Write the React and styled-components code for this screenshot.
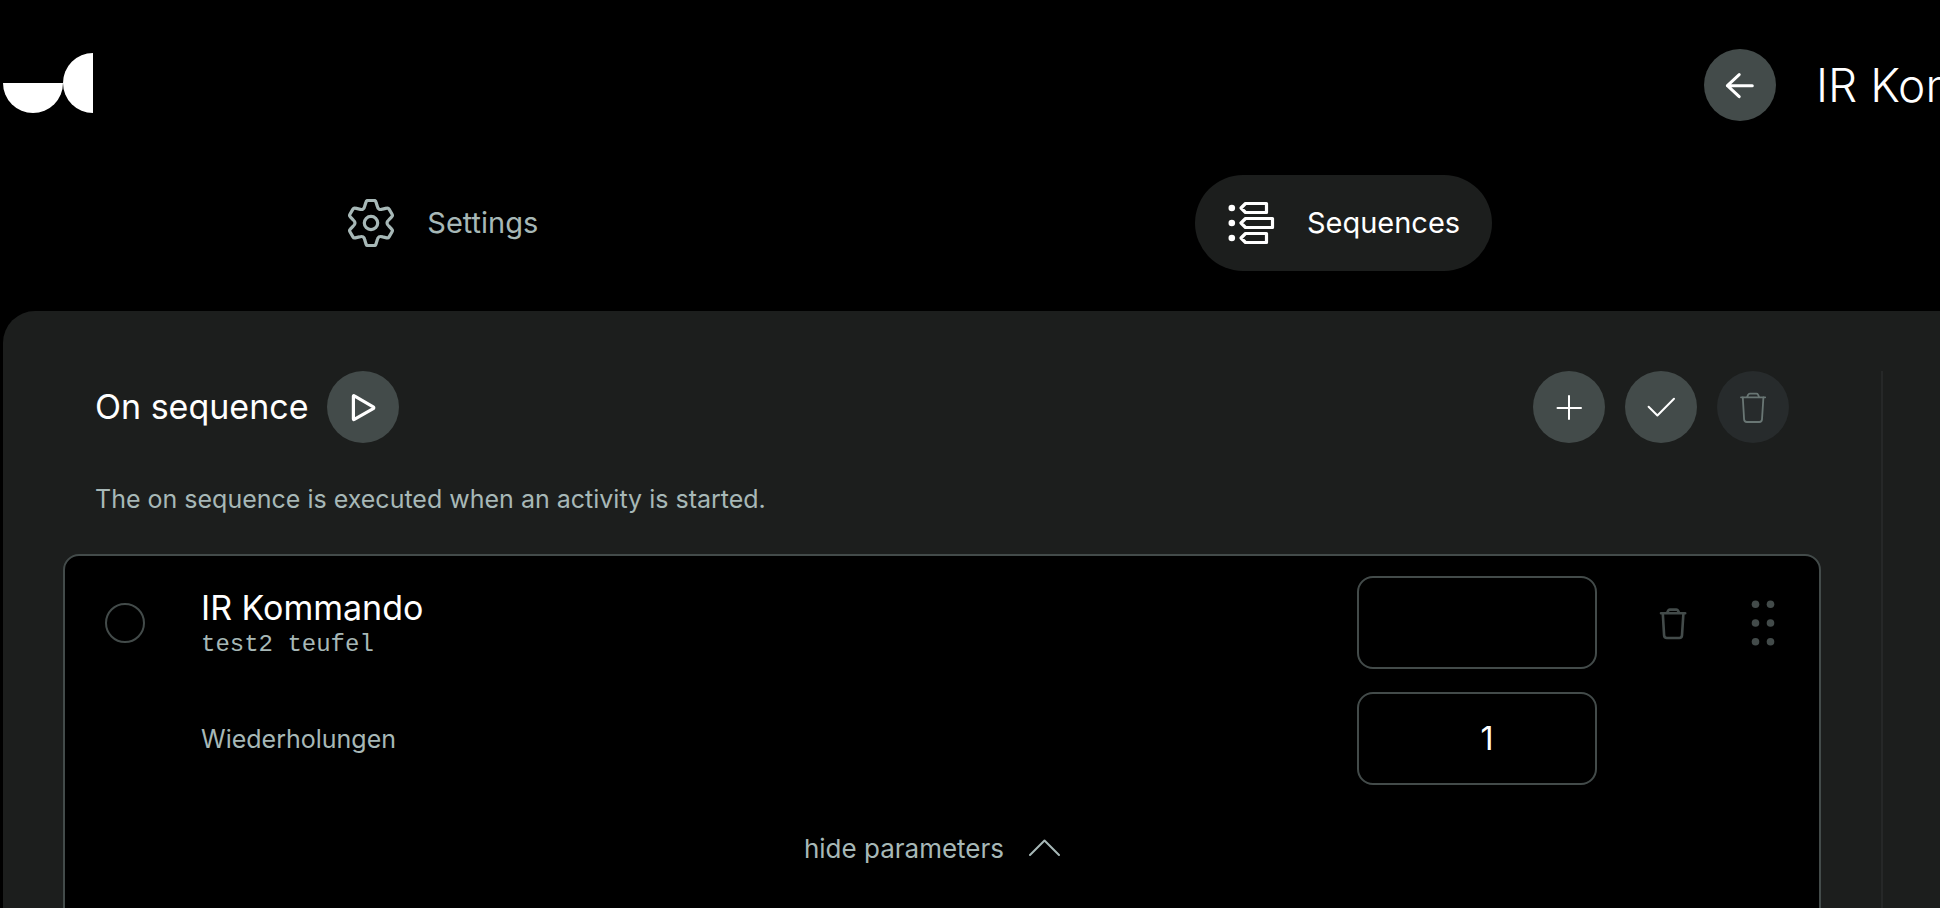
import React, { useState } from "react";
import styled, { createGlobalStyle, ThemeProvider } from "styled-components";

const theme = {
  black: "#000000",
  panel: "#1c1e1d",
  line: "#262828",
  disabled: "#272b2c",
  gray: "#434b4a",
  muted: "#697674",
  soft: "#a7b8b7",
  white: "#ffffff"
};

const GlobalStyle = createGlobalStyle`
  *, *::before, *::after {
    box-sizing: border-box;
  }

  body {
    margin: 0;
    background: #000000;
    color: #ffffff;
    font-family: Inter, "Open Sans", sans-serif;
    font-size: 25px;
    line-height: 36px;
  }

  button, input {
    font: inherit;
    color: inherit;
  }

  h1, h2, h3, p {
    margin: 0;
    font-weight: 400;
  }
`;

const Page = styled.div`
  display: flex;
  flex-direction: column;
  height: 100vh;
  padding-left: 3px;
  overflow: hidden;
`;

const Header = styled.header`
  display: flex;
  flex: none;
  justify-content: space-between;
  align-items: center;
  padding-top: 34px;
`;

const HeaderTitle = styled.div`
  display: flex;
  flex: 0 0 236px;
  align-items: center;
  gap: 40px;
  height: 102px;
  overflow: hidden;
`;

const PageTitle = styled.h1`
  flex: none;
  font-size: 46px;
  font-weight: 300;
  line-height: 72px;
  white-space: nowrap;
`;

const RoundButton = styled.button`
  display: flex;
  flex: none;
  justify-content: center;
  align-items: center;
  width: 72px;
  height: 72px;
  padding: 0;
  border: none;
  border-radius: 50%;
  background: ${p => p.theme.gray};
  cursor: pointer;

  &:disabled {
    background: ${p => p.theme.disabled};
    color: ${p => p.theme.muted};
    cursor: default;
  }
`;

const Tabs = styled.nav`
  display: flex;
  flex: none;
  justify-content: space-around;
  width: 93%;
  padding: 39px 0 40px;
`;

const Tab = styled.button`
  display: flex;
  align-items: center;
  gap: 32px;
  height: 96px;
  padding: 0 32px;
  border: none;
  border-radius: 48px;
  background: ${p => (p.$active ? p.theme.panel : "transparent")};
  color: ${p => (p.$active ? p.theme.white : p.theme.soft)};
  font-size: 29px;
  cursor: pointer;
`;

const Panel = styled.main`
  display: flex;
  flex: 1;
  min-height: 0;
  padding: 60px 57px 0 60px;
  border-top-left-radius: 32px;
  background: ${p => p.theme.panel};
`;

const Column = styled.section`
  flex: 1;
  padding-right: 60px;
  border-right: 2px solid ${p => p.theme.line};
`;

const ColumnHeader = styled.div`
  display: flex;
  align-items: center;
  gap: 18px;
  padding: 0 32px;
`;

const ColumnTitle = styled.h2`
  font-size: 34px;
  line-height: 48px;
`;

const Actions = styled.div`
  display: flex;
  gap: 20px;
  margin-left: auto;
`;

const Description = styled.p`
  padding: 38px 32px 37px;
  color: ${p => p.theme.soft};
`;

const Card = styled.article`
  height: 100%;
  padding: 20px 32px 0 40px;
  border: 2px solid ${p => p.theme.gray};
  border-radius: 16px;
  background: ${p => p.theme.black};
`;

const Row = styled.div`
  display: grid;
  grid-template-columns: 40px 1fr 240px 100px 90px;
  align-items: center;
  height: 93px;
  margin-bottom: 23px;
`;

const Select = styled.input`
  appearance: none;
  width: 40px;
  height: 40px;
  margin: 0;
  border: 2px solid ${p => p.theme.gray};
  border-radius: 50%;
  cursor: pointer;

  &:checked {
    background: ${p => p.theme.soft};
  }
`;

const Command = styled.div`
  padding: 8px 0 0 56px;
`;

const CommandName = styled.h3`
  font-size: 34px;
  line-height: 36px;
`;

const CommandTarget = styled.p`
  color: ${p => p.theme.soft};
  font-family: "Liberation Mono", monospace;
  font-size: 24px;
  line-height: 38px;
`;

const ParameterLabel = styled.label`
  grid-column: 2;
  padding-left: 56px;
  color: ${p => p.theme.soft};
`;

const Field = styled.input`
  width: 100%;
  height: 93px;
  padding: 0 8px 0 28px;
  border: 2px solid ${p => p.theme.gray};
  border-radius: 16px;
  background: ${p => p.theme.black};
  font-size: 32px;
  text-align: center;
`;

const IconButton = styled.button`
  display: flex;
  justify-content: center;
  justify-self: end;
  padding: 0;
  border: none;
  background: transparent;
  color: ${p => p.theme.gray};
  cursor: pointer;
`;

const Toggle = styled.button`
  display: flex;
  align-items: center;
  gap: 24px;
  margin: 0 auto;
  padding: 23px 28px 23px 0;
  border: none;
  background: transparent;
  color: ${p => p.theme.soft};
  font-size: 26px;
  cursor: pointer;
`;

const Icon = styled.svg`
  display: block;
  flex: none;
  fill: none;
  stroke: currentColor;
  stroke-linecap: round;
  stroke-linejoin: round;
`;

const LogoMark = styled.svg`
  flex: none;
  margin-bottom: 4px;
  fill: ${p => p.theme.white};
`;

// Every glyph is drawn around the middle of its box.
function Glyph({ size = 48, stroke = 2, children }) {
  const half = size / 2;
  return (
    <Icon
      width={size}
      height={size}
      viewBox={`${-half} ${-half} ${size} ${size}`}
      strokeWidth={stroke}
      aria-hidden="true"
    >
      {children}
    </Icon>
  );
}

const rotate = (x, y, deg) => {
  const a = (deg * Math.PI) / 180;
  const rx = x * Math.cos(a) - y * Math.sin(a);
  const ry = x * Math.sin(a) + y * Math.cos(a);
  return `${rx.toFixed(2)} ${ry.toFixed(2)}`;
};

const tooth = deg => {
  const p = (x, y) => rotate(x, y, deg);
  return [
    `L${p(-5, -21)}`,
    `Q${p(-4.6, -22.6)} ${p(-3, -22.6)}`,
    `L${p(3, -22.6)}`,
    `Q${p(4.6, -22.6)} ${p(5, -21)}`,
    `L${p(6.2, -17)}`,
    `Q${p(7.1, -12.3)} ${p(11.6, -13.9)}`
  ].join("");
};

const gear =
  `M${rotate(11.6, -13.9, -60)}` +
  [0, 60, 120, 180, 240, 300].map(tooth).join("") +
  "Z";

const Logo = () => (
  <LogoMark width="90" height="60" viewBox="0 0 90 60" aria-hidden="true">
    <path d="M0 30H60A30 30 0 0 1 0 30Z" />
    <path d="M90 0V60A30 30 0 0 1 90 0Z" />
  </LogoMark>
);

const SettingsIcon = () => (
  <Glyph stroke={3.2}>
    <path d={gear} />
    <circle r="6.7" />
  </Glyph>
);

const SequencesIcon = () => (
  <Glyph stroke={3.2}>
    <g fill="currentColor" stroke="none">
      <circle cx="-19.2" cy="-15" r="3.3" />
      <circle cx="-19.2" cy="0" r="3.3" />
      <circle cx="-19.2" cy="15" r="3.3" />
    </g>
    <path d="M-10-15L-5.5-19.5H15.5V-10.5H-5.5Z" />
    <path d="M-10 0L-5.5-4.5H21.5V4.5H-5.5Z" />
    <path d="M-10 15L-5.5 10.5H15.5V19.5H-5.5Z" />
  </Glyph>
);

const BackIcon = () => (
  <Glyph stroke={3}>
    <path d="M12.3.7H-12.6M-.8-10.4L-12.6.7L-.8 11.7" />
  </Glyph>
);

const PlayIcon = () => (
  <Glyph stroke={3.2}>
    <path d="M-9.6-10.8V12Q-9.6 13-8.7 12.4L10.2 1.6Q11.4.7 10.2-.1L-8.7-11.2Q-9.6-11.8-9.6-10.8Z" />
  </Glyph>
);

const PlusIcon = () => (
  <Glyph>
    <path d="M-11.5 1H12M0-11V12" />
  </Glyph>
);

const CheckIcon = () => (
  <Glyph>
    <path d="M-12.4-.3L-3.6 8.5L13-8.2" />
  </Glyph>
);

const TrashIcon = ({ stroke }) => (
  <Glyph stroke={stroke}>
    <path d="M-12-9.7H12.2M-6-9.9L-4.8-12.4Q-4.3-13.4-3.2-13.4H3.4Q4.5-13.4 5-12.4L6.2-9.9" />
    <path d="M-10.2-9.5L-8.9 12.4Q-8.7 15-6.2 15H6.4Q8.8 15 9 12.4L10.4-9.5" />
  </Glyph>
);

const DragIcon = () => (
  <Glyph>
    <g fill="currentColor" stroke="none">
      {[-18.7, 0, 18.7].map(y => (
        <React.Fragment key={y}>
          <circle cx="-7.5" cy={y} r="3.8" />
          <circle cx="7.5" cy={y} r="3.8" />
        </React.Fragment>
      ))}
    </g>
  </Glyph>
);

const ChevronIcon = () => (
  <Glyph size={32}>
    <path d="M-14 6L.5-8.5L15 6" />
  </Glyph>
);

const tabs = [
  { name: "Settings", icon: SettingsIcon },
  { name: "Sequences", icon: SequencesIcon }
];

function SequenceItem({ name, target }) {
  const [delay, setDelay] = useState("");
  const [repeat, setRepeat] = useState("1");
  const [open, setOpen] = useState(true);

  return (
    <Card>
      <Row>
        <Select type="checkbox" aria-label={name} />
        <Command>
          <CommandName>{name}</CommandName>
          <CommandTarget>{target}</CommandTarget>
        </Command>
        <Field
          aria-label="Delay"
          value={delay}
          onChange={e => setDelay(e.target.value)}
        />
        <IconButton aria-label="Delete">
          <TrashIcon stroke={2.6} />
        </IconButton>
        <IconButton aria-label="Move">
          <DragIcon />
        </IconButton>
      </Row>
      {open && (
        <Row>
          <ParameterLabel htmlFor="repeat">Wiederholungen</ParameterLabel>
          <Field
            id="repeat"
            inputMode="numeric"
            value={repeat}
            onChange={e => setRepeat(e.target.value)}
          />
        </Row>
      )}
      <Toggle onClick={() => setOpen(!open)}>
        {open ? "hide parameters" : "show parameters"}
        <ChevronIcon />
      </Toggle>
    </Card>
  );
}

function App() {
  const [active, setActive] = useState("Sequences");

  return (
    <ThemeProvider theme={theme}>
      <GlobalStyle />
      <Page>
        <Header>
          <Logo />
          <HeaderTitle>
            <RoundButton aria-label="Back">
              <BackIcon />
            </RoundButton>
            <PageTitle>IR Kommando</PageTitle>
          </HeaderTitle>
        </Header>
        <Tabs>
          {tabs.map(({ name, icon: TabIcon }) => (
            <Tab
              key={name}
              $active={name === active}
              onClick={() => setActive(name)}
            >
              <TabIcon />
              {name}
            </Tab>
          ))}
        </Tabs>
        <Panel>
          <Column>
            <ColumnHeader>
              <ColumnTitle>On sequence</ColumnTitle>
              <RoundButton aria-label="Run">
                <PlayIcon />
              </RoundButton>
              <Actions>
                <RoundButton aria-label="Add">
                  <PlusIcon />
                </RoundButton>
                <RoundButton aria-label="Select all">
                  <CheckIcon />
                </RoundButton>
                <RoundButton aria-label="Delete selected" disabled>
                  <TrashIcon stroke={1.8} />
                </RoundButton>
              </Actions>
            </ColumnHeader>
            <Description>
              The on sequence is executed when an activity is started.
            </Description>
            <SequenceItem name="IR Kommando" target="test2 teufel" />
          </Column>
        </Panel>
      </Page>
    </ThemeProvider>
  );
}

export default App;
